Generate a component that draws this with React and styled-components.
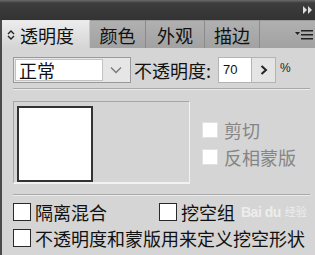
import React from "react";
import styled, { createGlobalStyle } from "styled-components";

const Global = createGlobalStyle`
  html, body { margin: 0; padding: 0; background: #d5d5d5; }
  body { font-family: "Noto Sans CJK SC", "Noto Sans", sans-serif; }
`;

const Panel = styled.div`
  position: relative;
  width: 315px;
  height: 255px;
  background: #d5d5d5;
  overflow: hidden;
  display: flex;
  flex-direction: column;
`;

const TitleBar = styled.div`
  height: 20px;
  background: linear-gradient(#6a6a6a 0px, #3d3d3d 3px, #333 20px);
  display: flex;
  justify-content: flex-end;
  align-items: center;
  padding-right: 2px;
  flex-shrink: 0;
`;

const TabRow = styled.div`
  height: 28px;
  display: flex;
  background: #a6a6a6;
  border-left: 2px solid #4a4a4a;
  flex-shrink: 0;
`;

const Tab = styled.div`
  height: 28px;
  box-sizing: border-box;
  width: ${(p) => p.$w}px;
  display: flex;
  align-items: center;
  justify-content: ${(p) => (p.$active ? "flex-start" : "center")};
  padding-left: ${(p) => (p.$active ? 5 : 0)}px;
  font-size: 18px;
  color: #111;
  background: ${(p) =>
    p.$active ? "linear-gradient(#ececec, #d5d5d5)" : "linear-gradient(#b0b0b0, #a2a2a2)"};
  border-right: 1px solid ${(p) => (p.$active ? "#c8c8c8" : "#8a8a8a")};
  border-top: 1px solid ${(p) => (p.$active ? "#e8e8e8" : "#9a9a9a")};
`;

const TabFill = styled.div`
  flex: 1;
  display: flex;
  justify-content: flex-end;
  align-items: center;
  padding-right: 2px;
  background: linear-gradient(#b0b0b0, #a2a2a2);
  border-top: 1px solid #9a9a9a;
`;

const Body = styled.div`
  flex: 1;
  border-left: 2px solid #4a4a4a;
  display: flex;
  flex-direction: column;
  padding-left: 11px;
`;

const TopRow = styled.div`
  display: flex;
  align-items: center;
  margin-top: 9px;
  height: 26px;
`;

const Select = styled.div`
  width: 118px;
  height: 26px;
  box-sizing: border-box;
  border: 1px solid #9a9a9a;
  background: #e6e6e6;
  display: flex;
  padding: 1px;
`;

const SelectValue = styled.div`
  width: 88px;
  background: #fff;
  border: 1px solid #c4c4c4;
  box-sizing: border-box;
  font-size: 18px;
  line-height: 20px;
  padding-left: 3px;
  color: #111;
`;

const Chevron = styled.div`
  flex: 1;
  display: flex;
  align-items: center;
  justify-content: center;
`;

const Label = styled.span`
  font-size: 18px;
  color: #111;
  margin-left: 3px;
  white-space: nowrap;
`;

const NumInput = styled.div`
  margin-left: 7px;
  width: 34px;
  height: 26px;
  box-sizing: border-box;
  border: 1px solid #b4b4b4;
  background: #fff;
  font-family: "Liberation Sans", sans-serif;
  font-size: 13px;
  line-height: 24px;
  padding-left: 4px;
  color: #111;
`;

const StepBtn = styled.div`
  width: 24px;
  height: 26px;
  box-sizing: border-box;
  border: 1px solid #b4b4b4;
  border-left: none;
  background: #e4e4e4;
  display: flex;
  align-items: center;
  justify-content: center;
`;

const Percent = styled.span`
  font-family: "Liberation Sans", sans-serif;
  font-size: 12px;
  color: #222;
  margin-left: 4px;
  margin-top: -5px;
`;

const Separator = styled.div`
  height: 1px;
  background: #a8a8a8;
  border-bottom: 1px solid #ececec;
  margin-top: ${(p) => p.$top}px;
  margin-right: 5px;
`;

const MaskArea = styled.div`
  display: flex;
  margin-top: 11px;
`;

const ThumbFrame = styled.div`
  width: 177px;
  height: 83px;
  box-sizing: border-box;
  border-top: 1px solid #a8a8a8;
  border-left: 1px solid #a8a8a8;
  border-right: 1px solid #f2f2f2;
  border-bottom: 2px solid #f2f2f2;
  padding: 4px 0 0 3px;
`;

const Thumb = styled.div`
  width: 76px;
  height: 76px;
  box-sizing: border-box;
  background: #fff;
  border: 2px solid #333;
`;

const MaskOptions = styled.div`
  display: flex;
  flex-direction: column;
  gap: 9px;
  margin-left: 12px;
  margin-top: 20px;
`;

const CheckRow = styled.div`
  display: flex;
  align-items: center;
  height: 18px;
`;

const Box = styled.span`
  width: ${(p) => (p.$disabled ? 16 : 18)}px;
  height: ${(p) => (p.$disabled ? 16 : 18)}px;
  box-sizing: border-box;
  background: #fff;
  border: 1px solid ${(p) => (p.$disabled ? "#e2e2e2" : "#2a2a2a")};
  flex-shrink: 0;
`;

const CheckText = styled.span`
  font-size: 18px;
  color: ${(p) => (p.$disabled ? "#858585" : "#111")};
  margin-left: ${(p) => (p.$disabled ? 6 : 4)}px;
  white-space: nowrap;
  line-height: 18px;
`;

const Options = styled.div`
  display: flex;
  flex-direction: column;
  gap: 8px;
  margin-top: 7px;
`;

const OptionLine = styled.div`
  display: flex;
`;

const Cell = styled.div`
  width: 146px;
`;

const Watermark = styled.div`
  position: absolute;
  left: 241px;
  top: 203px;
  display: flex;
  align-items: flex-end;
  color: rgba(255, 255, 255, 0.6);
  pointer-events: none;
`;

const WmLogo = styled.span`
  font-family: "Liberation Sans", sans-serif;
  font-weight: bold;
  font-size: 14px;
  letter-spacing: -0.5px;
`;

const WmText = styled.span`
  font-size: 11px;
  margin-left: 4px;
  margin-bottom: 1px;
`;

const SortIcon = () => (
  <svg width="8" height="10" viewBox="0 0 8 10" style={{ marginRight: 5 }}>
    <path d="M1 4 L4 1 L7 4" fill="none" stroke="#222" strokeWidth="1.4" />
    <path d="M1 6 L4 9 L7 6" fill="none" stroke="#222" strokeWidth="1.4" />
  </svg>
);

const MenuIcon = () => (
  <svg width="18" height="12" viewBox="0 0 18 12">
    <path d="M0 3 L5 3 L2.5 6 Z" fill="#222" />
    <rect x="6" y="1" width="12" height="1.5" fill="#222" />
    <rect x="6" y="5" width="12" height="1.5" fill="#222" />
    <rect x="6" y="9" width="12" height="1.5" fill="#222" />
  </svg>
);

const CollapseIcon = () => (
  <svg width="10" height="8" viewBox="0 0 10 8">
    <path d="M0 0 L4 4 L0 8 Z" fill="#ddd" />
    <path d="M5 0 L9 4 L5 8 Z" fill="#ddd" />
  </svg>
);

export default function App() {
  return (
    <>
      <Global />
      <Panel>
        <TitleBar>
          <CollapseIcon />
        </TitleBar>
        <TabRow>
          <Tab $active $w={88}>
            <SortIcon />
            透明度
          </Tab>
          <Tab $w={56}>颜色</Tab>
          <Tab $w={59}>外观</Tab>
          <Tab $w={55}>描边</Tab>
          <TabFill>
            <MenuIcon />
          </TabFill>
        </TabRow>
        <Body>
          <TopRow>
            <Select>
              <SelectValue>正常</SelectValue>
              <Chevron>
                <svg width="12" height="8" viewBox="0 0 12 8">
                  <path d="M1 1.5 L6 6.5 L11 1.5" fill="none" stroke="#777" strokeWidth="1.3" />
                </svg>
              </Chevron>
            </Select>
            <Label>不透明度:</Label>
            <NumInput>70</NumInput>
            <StepBtn>
              <svg width="8" height="10" viewBox="0 0 8 10">
                <path d="M1.5 1 L6 5 L1.5 9" fill="none" stroke="#222" strokeWidth="2" />
              </svg>
            </StepBtn>
            <Percent>%</Percent>
          </TopRow>
          <Separator $top={5} />
          <MaskArea>
            <ThumbFrame>
              <Thumb />
            </ThumbFrame>
            <MaskOptions>
              <CheckRow>
                <Box $disabled />
                <CheckText $disabled>剪切</CheckText>
              </CheckRow>
              <CheckRow>
                <Box $disabled />
                <CheckText $disabled>反相蒙版</CheckText>
              </CheckRow>
            </MaskOptions>
          </MaskArea>
          <Separator $top={10} />
          <Options>
            <OptionLine>
              <Cell>
                <CheckRow>
                  <Box />
                  <CheckText>隔离混合</CheckText>
                </CheckRow>
              </Cell>
              <CheckRow>
                <Box />
                <CheckText>挖空组</CheckText>
              </CheckRow>
            </OptionLine>
            <CheckRow>
              <Box />
              <CheckText>不透明度和蒙版用来定义挖空形状</CheckText>
            </CheckRow>
          </Options>
        </Body>
        <Watermark>
          <WmLogo>Bai du</WmLogo>
          <WmText>经验</WmText>
        </Watermark>
      </Panel>
    </>
  );
}
